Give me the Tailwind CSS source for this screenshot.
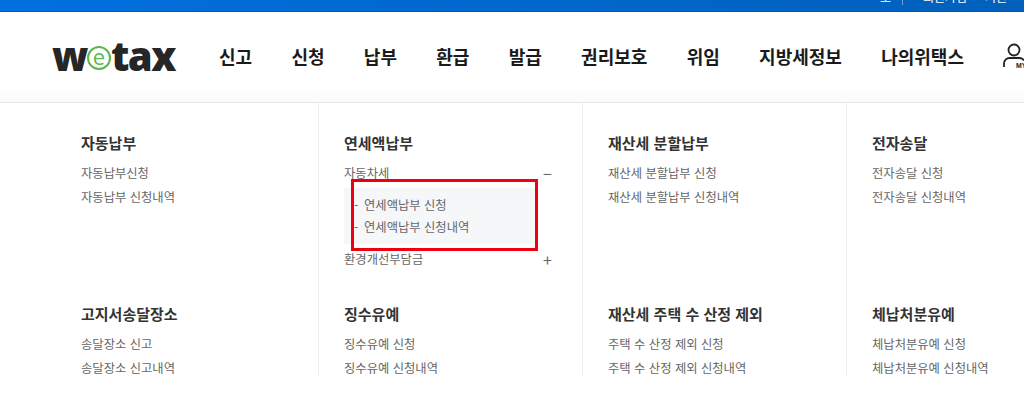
<!DOCTYPE html>
<html lang="ko">
<head>
  <meta charset="UTF-8" />
  <title>wetax</title>
  <script src="https://cdn.jsdelivr.net/npm/@tailwindcss/browser@4"></script>
</head>
<body class="w-[1024px] h-[400px] overflow-hidden bg-white font-['Noto_Sans_CJK_KR','Noto_Sans',sans-serif]">
  <!-- top bar -->
  <div class="h-[12px] bg-linear-to-r from-[#0070e0] to-[#0060bc] border-b border-[#0059b8] overflow-hidden relative">
    <div class="absolute left-[880px] -top-[11px] w-[144px] flex text-[12px] leading-[16px] text-white">
      <span class="w-[22px]">로</span>
      <span class="border-l border-white/40 pl-[20px] w-[83px]">회원가입</span>
      <span>지원</span>
    </div>
  </div>

  <!-- header -->
  <header class="h-[91px] flex items-center border-b border-[#e6e6e6] bg-linear-to-b from-white from-85% to-[#fafafa] pl-[52px] pb-[2px] overflow-hidden">
    <div class="w-[167px] shrink-0 flex items-center font-['Open_Sans',sans-serif] font-extrabold text-[40px] leading-none tracking-[-1.5px] text-[#262626]">
      <span>w</span>
      <span class="w-[24px] h-[24px] shrink-0 mt-[3px] rounded-full border-2 border-[#5bb84d] flex items-center justify-center text-[22px] font-normal text-[#5bb84d] leading-none pb-[3px] tracking-normal">e</span>
      <span>tax</span>
    </div>
    <nav class="flex items-center gap-[39.3px] text-[18px] font-bold text-[#1a1a1a] whitespace-nowrap">
      <a>신고</a><a>신청</a><a>납부</a><a>환급</a><a>발급</a><a>권리보호</a><a>위임</a><a>지방세정보</a><a>나의위택스</a>
    </nav>
    <svg class="ml-[38px] shrink-0" width="26" height="28" viewBox="0 0 26 28" fill="none" stroke="#222" stroke-width="1.800">
      <circle cx="12" cy="8" r="5.500" />
      <path d="M2 25v-3.500a5.500 5.500 0 0 1 5.500-5.500h10a5.500 5.500 0 0 1 4.500 2.500" />
      <text x="14" y="26" font-size="7" font-weight="700" fill="#222" stroke="none" font-family="Liberation Sans">MY</text>
    </svg>
  </header>

  <!-- menu panel -->
  <main class="h-[273px] overflow-hidden pl-[55px] grid grid-cols-[264px_264px_264px_264px] grid-rows-[171px_171px]">
    <section class="pl-[26px] pt-[30px] border-r border-[#eeeeee]">
      <h3 class="text-[15px] leading-[20px] font-bold text-[#333] mb-[8px]">자동납부</h3>
      <p class="text-[12.3px] leading-[24px] text-[#666]">자동납부신청</p>
      <p class="text-[12.3px] leading-[24px] text-[#666]">자동납부 신청내역</p>
    </section>
    <section class="pl-[25px] pr-[30px] pt-[30px] border-r border-[#eeeeee]">
      <h3 class="text-[15px] leading-[20px] font-bold text-[#333] mb-[8px]">연세액납부</h3>
      <p class="flex justify-between items-center text-[12.3px] leading-[24px] text-[#666]">자동차세 <span class="text-[16px] leading-none">−</span></p>
      <div class="relative w-[192px] bg-[#f6f7f9] h-[56px] mt-[3px] mb-[3px] pt-[6px] text-[12.3px] leading-[22px] text-[#666]">
        <p class="pl-[20px] relative"><span class="absolute left-[10px]">-</span>연세액납부 신청</p>
        <p class="pl-[20px] relative"><span class="absolute left-[10px]">-</span>연세액납부 신청내역</p>
        <!-- red highlight box -->
        <div class="absolute left-[7px] -top-[9px] w-[187px] h-[72px] border-[3px] border-[#ee0010]"></div>
      </div>
      <p class="flex justify-between items-center text-[12.3px] leading-[24px] text-[#666]">환경개선부담금 <span class="text-[16px] leading-none">+</span></p>
    </section>
    <section class="pl-[25px] pt-[30px] border-r border-[#eeeeee]">
      <h3 class="text-[15px] leading-[20px] font-bold text-[#333] mb-[8px]">재산세 분할납부</h3>
      <p class="text-[12.3px] leading-[24px] text-[#666]">재산세 분할납부 신청</p>
      <p class="text-[12.3px] leading-[24px] text-[#666]">재산세 분할납부 신청내역</p>
    </section>
    <section class="pl-[25px] pt-[30px]">
      <h3 class="text-[15px] leading-[20px] font-bold text-[#333] mb-[8px]">전자송달</h3>
      <p class="text-[12.3px] leading-[24px] text-[#666]">전자송달 신청</p>
      <p class="text-[12.3px] leading-[24px] text-[#666]">전자송달 신청내역</p>
    </section>

    <section class="pl-[26px] pt-[30px] border-r border-[#eeeeee]">
      <h3 class="text-[15px] leading-[20px] font-bold text-[#333] mb-[8px]">고지서송달장소</h3>
      <p class="text-[12.3px] leading-[24px] text-[#666]">송달장소 신고</p>
      <p class="text-[12.3px] leading-[24px] text-[#666]">송달장소 신고내역</p>
    </section>
    <section class="pl-[25px] pt-[30px] border-r border-[#eeeeee]">
      <h3 class="text-[15px] leading-[20px] font-bold text-[#333] mb-[8px]">징수유예</h3>
      <p class="text-[12.3px] leading-[24px] text-[#666]">징수유예 신청</p>
      <p class="text-[12.3px] leading-[24px] text-[#666]">징수유예 신청내역</p>
    </section>
    <section class="pl-[25px] pt-[30px] border-r border-[#eeeeee]">
      <h3 class="text-[15px] leading-[20px] font-bold text-[#333] mb-[8px]">재산세 주택 수 산정 제외</h3>
      <p class="text-[12.3px] leading-[24px] text-[#666]">주택 수 산정 제외 신청</p>
      <p class="text-[12.3px] leading-[24px] text-[#666]">주택 수 산정 제외 신청내역</p>
    </section>
    <section class="pl-[25px] pt-[30px]">
      <h3 class="text-[15px] leading-[20px] font-bold text-[#333] mb-[8px]">체납처분유예</h3>
      <p class="text-[12.3px] leading-[24px] text-[#666]">체납처분유예 신청</p>
      <p class="text-[12.3px] leading-[24px] text-[#666]">체납처분유예 신청내역</p>
    </section>
  </main>
</body>
</html>
